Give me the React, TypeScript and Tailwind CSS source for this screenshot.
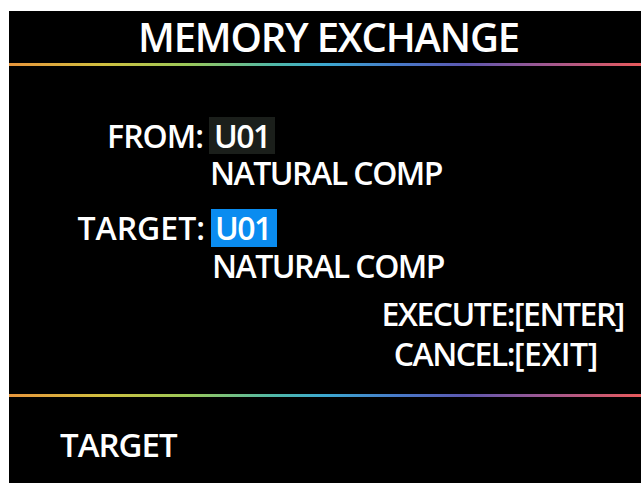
import React from "react";

const Rainbow = () => (
  <div className="h-[3px] w-full bg-[linear-gradient(90deg,#e8963c_0%,#d0c040_15%,#9cc858_28%,#50b8a8_42%,#3ca8d0_50%,#4878c8_62%,#5c58b0_72%,#a05890_85%,#e85a5c_100%)]" />
);

export default function App() {
  return (
    <div className="w-[641px] h-[483px] bg-white pl-[9px] pt-[11px] overflow-hidden">
      <div
        className="w-[632px] h-[472px] bg-black text-white flex flex-col"
        style={{ fontFamily: '"Open Sans", "Liberation Sans", sans-serif' }}
      >
        <div className="h-[52px] pl-[129px] text-[40px] leading-[52px] font-semibold tracking-[-1.2px] whitespace-nowrap">
          MEMORY EXCHANGE
        </div>
        <Rainbow />
        <div className="h-[328px] pt-[51px] text-[32px] font-semibold leading-[37px] tracking-[-1.5px] whitespace-nowrap">
          <div className="grid grid-cols-[196px_auto] gap-x-[4px] justify-start">
            <div className="text-right tracking-[-1px] pr-[2px]">FROM:</div>
            <div>
              <span className="inline-block bg-[#1b1f1b] px-[5px]">U01</span>
            </div>
            <div />
            <div className="pl-[1px]">NATURAL COMP</div>
            <div className="text-right mt-[18px] tracking-[0px]">TARGET:</div>
            <div className="mt-[18px]">
              <span className="inline-block bg-[#0a8cf0] pl-[4px] pr-[6px] ml-[2px] h-[38px]">U01</span>
            </div>
            <div />
            <div className="pl-[3px]">NATURAL COMP</div>
          </div>
          <div className="grid grid-cols-[505px_auto] justify-start mt-[10px] leading-[40px]">
            <div className="text-right">EXECUTE:</div>
            <div>[ENTER]</div>
            <div className="text-right">CANCEL:</div>
            <div className="tracking-[-0.5px]">[EXIT]</div>
          </div>
        </div>
        <Rainbow />
        <div className="pl-[51px] pt-[28px] text-[33px] font-semibold leading-[40px] tracking-[-1px]">
          TARGET
        </div>
      </div>
    </div>
  );
}
